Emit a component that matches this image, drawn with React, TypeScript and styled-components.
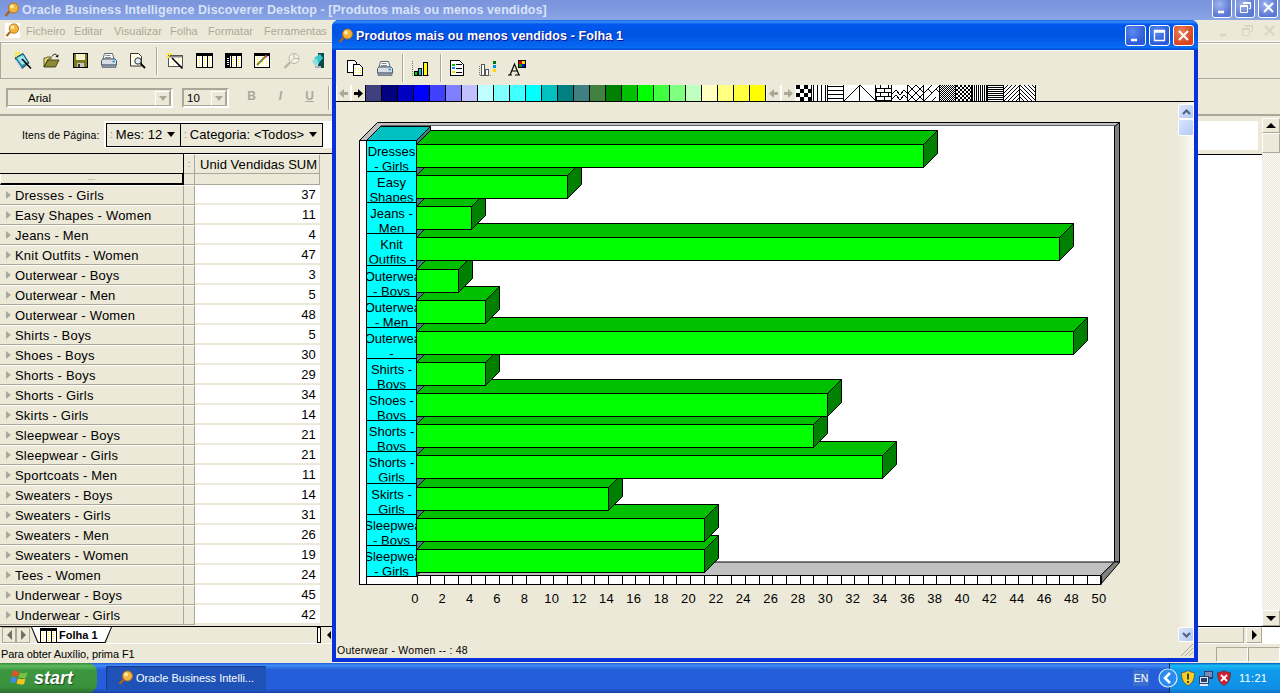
import React from "react";
import styled, { createGlobalStyle } from "styled-components";

const GlobalStyle = createGlobalStyle`
  html, body { margin: 0; padding: 0; background: #ece9d8; overflow: hidden; }
  * { box-sizing: border-box; }
`;

const UI = `"Liberation Sans", Arial, sans-serif`;
const BEIGE = "#ece9d8";

const products: [string, number][] = [
  ["Dresses - Girls", 37], ["Easy Shapes - Women", 11], ["Jeans - Men", 4], ["Knit Outfits - Women", 47],
  ["Outerwear - Boys", 3], ["Outerwear - Men", 5], ["Outerwear - Women", 48], ["Shirts - Boys", 5],
  ["Shoes - Boys", 30], ["Shorts - Boys", 29], ["Shorts - Girls", 34], ["Skirts - Girls", 14],
  ["Sleepwear - Boys", 21], ["Sleepwear - Girls", 21], ["Sportcoats - Men", 11], ["Sweaters - Boys", 14],
  ["Sweaters - Girls", 31], ["Sweaters - Men", 26], ["Sweaters - Women", 19], ["Tees - Women", 24],
  ["Underwear - Boys", 45], ["Underwear - Girls", 42],
];

const chartLabels: [string, string][] = [
  ["Dresses", "- Girls"], ["Easy", "Shapes"], ["Jeans -", "Men"], ["Knit", "Outfits -"],
  ["Outerwear", "- Boys"], ["Outerwear", "- Men"], ["Outerwear", "-"], ["Shirts -", "Boys"],
  ["Shoes -", "Boys"], ["Shorts -", "Boys"], ["Shorts -", "Girls"], ["Skirts -", "Girls"],
  ["Sleepwear", "- Boys"], ["Sleepwear", "- Girls"],
];

const swatches = [
  "#404080", "#000080", "#0000c0", "#0000ff", "#4040ff", "#8080ff", "#c0c0ff", "#c0ffff", "#80ffff",
  "#40ffff", "#00ffff", "#00c0c0", "#008080", "#408080", "#408040", "#008000", "#00c000", "#00ff00",
  "#40ff40", "#80ff80", "#c0ffc0", "#ffffc0", "#ffff80", "#ffff40", "#ffff00",
];

const checker = (n: number) => {
  let d = "";
  for (let y = 0; y < 16; y += n)
    for (let x = 0; x < 16; x += n)
      if ((x + y) / n % 2 === 0) d += `M${x} ${y}h${n}v${n}h${-n}z`;
  return d;
};
const stripes = (step: number, dir: "v" | "h") => {
  let d = "";
  for (let i = step / 2 - 0.5; i < 16; i += step) d += dir === "v" ? `M${i} 0v16` : `M0 ${i}h16`;
  return d;
};
const slashes = (step: number, back: boolean) => {
  let d = "";
  for (let i = -16; i < 32; i += step)
    d += back ? `M${i} 0L${i + 16} 16` : `M${i} 16L${i + 16} 0`;
  return d;
};

const hatchPatterns: { fill?: string; stroke?: string }[] = [
  { fill: checker(4) },
  { stroke: stripes(4, "v") },
  { stroke: stripes(4, "h") },
  { stroke: "M0 16L16 0" },
  { stroke: "M0 0L16 16" },
  { stroke: "M0 3.5h16M0 7.5h16M0 11.5h16M0 15.5h16M4.5 0v3.5M12.5 0v3.5M.5 3.5v4M8.5 3.5v4M4.5 7.5v4M12.5 7.5v4M.5 11.5v4M8.5 11.5v4" },
  { stroke: "M0 9L4 5L8 10L12 5L16 9M0 14L4 10L8 15L12 10L16 14" },
  { stroke: "M0 0L16 16M0 16L16 0M0 8L8 0M8 16L16 8M0 8L8 16M8 0L16 8" },
  { stroke: "M0 16L16 0M0 8L8 0M8 16L12 12M4 4L8 8M12 4L16 8" },
  { fill: checker(1) },
  { fill: checker(2) },
  { stroke: stripes(2, "v") },
  { stroke: stripes(2, "h") },
  { stroke: slashes(4, false) },
  { stroke: slashes(4, true) },
];

/* ---------- frame ---------- */

const Desktop = styled.div`
  position: relative;
  width: 1280px;
  height: 693px;
  overflow: hidden;
  display: flex;
  flex-direction: column;
  font-family: ${UI};
  background: ${BEIGE};
`;

const MainTitle = styled.div`
  height: 20px;
  flex: none;
  display: flex;
  align-items: center;
  padding: 0 2px 0 4px;
  gap: 2px;
  overflow: hidden;
  background: linear-gradient(180deg, #7a94dc 0%, #7f9ae0 50%, #8ba6e6 100%);
`;

const MainTitleText = styled.span`
  font-size: 12.5px;
  font-weight: 700;
  letter-spacing: 0.08px;
  color: #d8e3f8;
  white-space: nowrap;
  margin-right: auto;
`;

const CapButtons = styled.div<{ $lift?: number }>`
  display: flex;
  gap: 3px;
  margin-bottom: ${(p) => p.$lift ?? 0}px;
`;

const CapButton = styled.div<{ $tone: "blue" | "red" | "faded"; $size: number }>`
  width: ${(p) => p.$size}px;
  height: ${(p) => p.$size}px;
  border: 1px solid #fff;
  border-radius: 3px;
  display: flex;
  align-items: center;
  justify-content: center;
  background: ${(p) =>
    p.$tone === "red"
      ? "radial-gradient(circle at 35% 30%, #e8825c, #d9431e 70%)"
      : p.$tone === "faded"
      ? "radial-gradient(circle at 35% 30%, #a0b4ee, #5a78d4 70%)"
      : "radial-gradient(circle at 35% 30%, #5b8af0, #2a5ad8 70%)"};
`;

const MenuBar = styled.div`
  height: 22px;
  flex: none;
  display: flex;
  align-items: center;
  padding-left: 5px;
  background: ${BEIGE};
  border-bottom: 1px solid #fff;
`;

const MenuIcon = styled.div`
  width: 15px;
  height: 15px;
  background: #fff;
  display: flex;
  margin-right: 6px;
`;

const MenuItem = styled.span<{ $w: number }>`
  width: ${(p) => p.$w}px;
  font-size: 11px;
  letter-spacing: 0.05px;
  color: #aca899;
`;

const MdiButtons = styled.div`
  margin-left: auto;
  margin-right: 2px;
  width: 60px;
  display: flex;
  justify-content: space-between;
  padding-right: 2px;
`;

const MainToolbar = styled.div`
  height: 37px;
  flex: none;
  display: flex;
  align-items: center;
  padding-left: 13px;
  border-top: 1px solid #aca899;
  border-bottom: 1px solid #aca899;
  border-left: 1px solid #aca899;
  box-shadow: inset 0 1px 0 #fff;
`;

const ToolSlot = styled.div<{ $w: number }>`
  width: ${(p) => p.$w}px;
  flex: none;
  display: flex;
  align-items: center;
`;

const ToolSep = styled.div<{ $h: number; $mx: number }>`
  width: 1px;
  height: ${(p) => p.$h}px;
  margin: 0 ${(p) => p.$mx}px;
  background: #aca899;
  box-shadow: 1px 0 0 #fff;
  flex: none;
`;

const FontToolbar = styled.div`
  height: 37px;
  flex: none;
  display: flex;
  align-items: center;
  padding-left: 6px;
  padding-top: 3px;
  border-bottom: 2px solid #aca899;
`;

const Combo = styled.div<{ $w: number; $pad: number; $mr: number }>`
  width: ${(p) => p.$w}px;
  height: 20px;
  margin-right: ${(p) => p.$mr}px;
  padding-left: ${(p) => p.$pad}px;
  border: 2px solid #aca899;
  border-right-color: #fff;
  border-bottom-color: #fff;
  box-shadow: inset -1px -1px 0 #aca899;
  display: flex;
  align-items: center;
  justify-content: space-between;
  font-size: 11.5px;
  color: #000;
`;

const ComboArrow = styled.div`
  width: 15px;
  height: 15px;
  margin-right: 1px;
  background: ${BEIGE};
  border: 1px solid #aca899;
  border-top-color: #fff;
  border-left-color: #fff;
  display: flex;
  align-items: center;
  justify-content: center;
  &::after {
    content: "";
    border-top: 5px solid #aca899;
    border-left: 4px solid transparent;
    border-right: 4px solid transparent;
  }
`;

const FormatLetter = styled.span<{ $i?: boolean; $u?: boolean }>`
  width: 29px;
  margin-bottom: 4px;
  text-align: center;
  color: #aca899;
  font-size: 12px;
  font-weight: 700;
  font-style: ${(p) => (p.$i ? "italic" : "normal")};
  text-decoration: ${(p) => (p.$u ? "underline" : "none")};
`;

const Workspace = styled.div`
  height: 527px;
  flex: none;
  display: flex;
`;

const LeftPane = styled.div`
  width: 332px;
  flex: none;
  display: flex;
  flex-direction: column;
`;

const PageItems = styled.div`
  height: 38px;
  flex: none;
  display: flex;
  align-items: center;
  padding-left: 22px;
  gap: 3px;
  border-bottom: 1px solid #000;
  font-size: 10.5px;
`;

const PageItemsLabel = styled.span`
  width: 79px;
  white-space: nowrap;
  letter-spacing: 0.1px;
`;

const PageWell = styled.div`
  flex: 1;
  height: 27px;
  display: flex;
  align-items: center;
  padding-left: 2px;
  background: #fff;
`;

const PageButtons = styled.div`
  display: flex;
  height: 24px;
  border: 1px solid #000;
  background: ${BEIGE};
`;

const PageButton = styled.div<{ $w: number }>`
  width: ${(p) => p.$w}px;
  display: flex;
  align-items: center;
  gap: 3px;
  padding: 0 5px 0 3px;
  font-size: 13px;
  letter-spacing: 0.05px;
  white-space: nowrap;
  & + & { border-left: 1px solid #000; }
  &::after {
    content: "";
    margin-left: auto;
    border-top: 5px solid #000;
    border-left: 4.5px solid transparent;
    border-right: 4.5px solid transparent;
  }
`;

const Grip = styled.span`
  color: #8a8678;
  font-size: 10px;
  letter-spacing: 0;
`;

const Grid = styled.div`
  flex: 1;
  min-height: 0;
  overflow: hidden;
  width: 320px;
`;

const GridRow = styled.div<{ $h: number }>`
  height: ${(p) => p.$h}px;
  display: grid;
  grid-template-columns: 184px 11px 125px;
`;

const HeaderBlank = styled.div`
  border-right: 1px solid #000;
  border-bottom: 1px solid #000;
`;

const HeaderGrip = styled.div`
  display: flex;
  align-items: center;
  justify-content: center;
  color: #8a8678;
  font-size: 9px;
  border-right: 1px solid #aca899;
  border-bottom: 1px solid #aca899;
  border-top: 1px solid #fff;
`;

const HeaderCell = styled.div`
  display: flex;
  align-items: center;
  padding-left: 5px;
  font-size: 13px;
  letter-spacing: 0.05px;
  white-space: nowrap;
  border-right: 1px solid #aca899;
  border-bottom: 1px solid #aca899;
  border-top: 1px solid #fff;
`;

const SubHeader = styled.div`
  display: flex;
  justify-content: center;
  font-size: 9px;
  line-height: 7px;
  color: #8a8678;
  border-right: 2px solid #000;
  border-bottom: 2px solid #000;
  border-left: 1px solid #fff;
`;

const FillerCell = styled.div`
  border-right: 1px solid #aca899;
  border-bottom: 1px solid #aca899;
`;

const RowHead = styled.div`
  display: flex;
  align-items: center;
  gap: 4px;
  padding-left: 6px;
  font-size: 13px;
  letter-spacing: 0.2px;
  white-space: nowrap;
  border-top: 1px solid #fff;
  border-right: 1px solid #aca899;
  border-bottom: 1px solid #aca899;
  &::before {
    content: "";
    border-left: 5px solid #aca899;
    border-top: 4px solid transparent;
    border-bottom: 4px solid transparent;
  }
`;

const RowGap = styled.div`
  border-top: 1px solid #fff;
  border-right: 1px solid #aca899;
  border-bottom: 1px solid #aca899;
`;

const RowValue = styled.div`
  background: #fff;
  display: flex;
  align-items: center;
  justify-content: flex-end;
  padding-right: 4px;
  font-size: 13px;
  letter-spacing: 0.2px;
  border-bottom: 2px solid ${BEIGE};
`;

const TabStrip = styled.div`
  height: 17px;
  flex: none;
  display: flex;
  align-items: stretch;
  border-top: 1px solid #000;
  padding-left: 2px;
`;

const TabArrow = styled.div<{ $left?: boolean }>`
  width: 14px;
  border: 1px solid #aca899;
  display: flex;
  align-items: center;
  justify-content: center;
  &::after {
    content: "";
    border-top: 5px solid transparent;
    border-bottom: 5px solid transparent;
    ${(p) => (p.$left ? "border-right: 5px solid #716f64;" : "border-left: 5px solid #716f64;")}
  }
`;

const SheetTab = styled.div`
  width: 81px;
  margin-left: 1px;
  display: flex;
  align-items: center;
  gap: 2px;
  padding-left: 9px;
  font-size: 11px;
  font-weight: 700;
  white-space: nowrap;
  clip-path: polygon(0 0, 100% 0, 92% 100%, 8% 100%);
  background: #000;
  position: relative;
  z-index: 0;
  &::before {
    content: "";
    position: absolute;
    inset: 0 1px 1px 1px;
    background: #fff;
    clip-path: polygon(0 0, 100% 0, 92% 100%, 8% 100%);
    z-index: -1;
  }
`;

const TabRest = styled.div`
  flex: 1;
  display: flex;
  justify-content: flex-end;
`;

const SplitHandle = styled.div`
  width: 4px;
  margin-right: 6px;
  background: #fff;
  border: 1px solid #000;
`;

const BlackArrow = styled.div`
  width: 5px;
  display: flex;
  align-items: center;
  &::after {
    content: "";
    border-top: 4px solid transparent;
    border-bottom: 4px solid transparent;
    border-right: 4px solid #000;
  }
`;

const BehindWindow = styled.div`
  flex: 1;
`;

const RightPane = styled.div`
  width: 82px;
  flex: none;
  display: flex;
  flex-direction: column;
`;

const RightBody = styled.div`
  flex: 1;
  display: flex;
  min-height: 0;
`;

const RightContent = styled.div`
  flex: 1;
  display: flex;
  flex-direction: column;
`;

const RightTop = styled.div`
  height: 39px;
  flex: none;
  padding: 5px 4px 4px 0;
  border-bottom: 1px solid #000;
`;

const RightTopBox = styled.div`
  height: 100%;
  background: #fff;
`;

const RightWhite = styled.div`
  flex: 1;
  background: #fff;
`;

const VScroll = styled.div`
  width: 18px;
  flex: none;
  display: flex;
  flex-direction: column;
  padding-top: 2px;
  background: ${BEIGE};
`;

const ScrollBtn = styled.div<{ $h: number }>`
  height: ${(p) => p.$h}px;
  flex: none;
  background: ${BEIGE};
  border: 1px solid #aca899;
  border-top-color: #fff;
  border-left-color: #fff;
  display: flex;
  align-items: center;
  justify-content: center;
`;

const UpTri = styled.div`
  border-bottom: 5px solid #000;
  border-left: 5px solid transparent;
  border-right: 5px solid transparent;
`;

const DownTri = styled.div`
  border-top: 5px solid #000;
  border-left: 5px solid transparent;
  border-right: 5px solid transparent;
`;

const RightTri = styled.div`
  border-left: 5px solid #000;
  border-top: 5px solid transparent;
  border-bottom: 5px solid transparent;
`;

const DitherTrack = styled.div`
  flex: 1;
  background: repeating-conic-gradient(#fff 0 25%, #e6e3d2 0 50%) 0 0 / 2px 2px;
`;

const RightHScroll = styled.div`
  height: 17px;
  flex: none;
  display: flex;
  border-top: 1px solid #000;
`;

const HScrollFill = styled.div`
  width: 46px;
  border: 1px solid #aca899;
  border-top-color: #fff;
  border-left: 0;
`;

const HScrollBtn = styled.div`
  width: 16px;
  margin-left: 2px;
  border: 1px solid #aca899;
  border-top-color: #fff;
  border-left-color: #fff;
  display: flex;
  align-items: center;
  justify-content: center;
`;

const CornerWhite = styled.div`
  flex: 1;
  background: #fff;
`;

const StatusBar = styled.div`
  height: 20px;
  flex: none;
  display: flex;
  align-items: center;
  padding-left: 1px;
  font-size: 11px;
  letter-spacing: -0.1px;
  border-top: 1px solid #fff;
`;

const StatusPanels = styled.div`
  margin-left: auto;
  display: flex;
  align-self: stretch;
  padding: 3px 0 1px;
`;

const StatusPanel = styled.div<{ $w: number }>`
  width: ${(p) => p.$w}px;
  border: 1px solid #fff;
  border-top-color: #aca899;
  border-left-color: #aca899;
`;

/* ---------- taskbar ---------- */

const Taskbar = styled.div`
  height: 30px;
  flex: none;
  margin-top: auto;
  display: flex;
  align-items: stretch;
  background: linear-gradient(180deg, #245edb 0%, #3f8cf3 8%, #245edb 22%, #245edb 85%, #1941a5 100%);
`;

const StartButton = styled.div`
  width: 97px;
  flex: none;
  display: flex;
  align-items: center;
  gap: 5px;
  padding-left: 10px;
  color: #fff;
  font-size: 18px;
  font-weight: 700;
  font-style: italic;
  text-shadow: 1px 1px 1px #1c4a1c;
  border-radius: 0 9px 9px 0;
  background: linear-gradient(180deg, #388e3c 0%, #5cb85c 10%, #3c963f 25%, #3a913d 80%, #2b6e2e 100%);
`;

const TaskButton = styled.div`
  width: 160px;
  height: 24px;
  align-self: center;
  margin-left: 9px;
  display: flex;
  align-items: center;
  gap: 2px;
  padding-left: 12px;
  color: #fff;
  font-size: 11px;
  white-space: nowrap;
  border-radius: 2px;
  background: #1e52b7;
  box-shadow: inset 1px 1px 1px #153a8a;
`;

const Lang = styled.div`
  margin-left: auto;
  margin-right: 9px;
  align-self: center;
  width: 16px;
  height: 16px;
  display: flex;
  align-items: center;
  justify-content: center;
  background: #3a6fcf;
  color: #fff;
  font-size: 10.5px;
`;

const ChevronWrap = styled.div`
  width: 20px;
  flex: none;
  align-self: center;
  margin-right: -9px;
  position: relative;
  z-index: 1;
  display: flex;
`;

const Tray = styled.div`
  width: 111px;
  flex: none;
  display: flex;
  align-items: center;
  padding-left: 11px;
  gap: 3px;
  background: linear-gradient(180deg, #0c59b9 0%, #19b9f3 8%, #0f9beb 25%, #0f8fe6 85%, #0e72c8 100%);
  border-left: 1px solid #092e51;
`;

const Clock = styled.span`
  margin-left: 5px;
  color: #fff;
  font-size: 11px;
  letter-spacing: 0.3px;
`;

/* ---------- chart window ---------- */

const ChildWindow = styled.div`
  position: absolute;
  left: 332px;
  top: 20px;
  width: 866px;
  height: 642px;
  display: flex;
  flex-direction: column;
  background: #0831d9;
  border-radius: 7px 7px 0 0;
  padding: 0 4px 4px;
`;

const ChildTitle = styled.div`
  height: 30px;
  flex: none;
  display: flex;
  align-items: center;
  gap: 2px;
  margin: 0 -4px;
  padding: 1px 4px 0 6px;
  border-radius: 7px 7px 0 0;
  background: linear-gradient(180deg, #0a5fe8 0%, #3a90f8 6%, #0058ee 14%, #0054e3 50%, #0466f0 85%, #0a6cf2 92%, #0244c4 100%);
`;

const ChildTitleText = styled.span`
  font-size: 12.5px;
  font-weight: 700;
  letter-spacing: 0.11px;
  color: #fff;
  text-shadow: 1px 1px 0 #0f1089;
  margin-right: auto;
`;

const ChildBody = styled.div`
  flex: 1;
  min-height: 0;
  display: flex;
  flex-direction: column;
  background: ${BEIGE};
`;

const ChildToolbar = styled.div`
  height: 35px;
  flex: none;
  display: flex;
  align-items: center;
  padding-left: 11px;
  border-top: 1px solid #fff;
`;

const PaletteRow = styled.div`
  height: 17px;
  flex: none;
  display: flex;
  border-bottom: 1px solid #000;
`;

const PalNav = styled.div<{ $off?: boolean }>`
  width: 15px;
  flex: none;
  display: flex;
  align-items: center;
  justify-content: center;
  background: ${BEIGE};
  border-right: 1px solid ${(p) => (p.$off ? "#fff" : "#000")};
  border-left: 1px solid #fff;
`;

const Swatch = styled.div<{ $c: string }>`
  width: 16px;
  flex: none;
  background: ${(p) => p.$c};
  border-right: 1px solid #000;
`;

const HatchCell = styled.svg`
  display: block;
  flex: none;
`;

const ChildMain = styled.div`
  flex: 1;
  min-height: 0;
  display: flex;
`;

const ChartCanvas = styled.div`
  flex: 1;
  min-width: 0;
`;

const ChartSvg = styled.svg`
  display: block;
`;

const CellText = styled.text`
  font-family: ${UI};
  font-size: 13px;
  text-anchor: middle;
  fill: #000;
`;

const AxisText = styled.text`
  font-family: ${UI};
  font-size: 13px;
  letter-spacing: 0.3px;
  text-anchor: middle;
  fill: #000;
`;

const XpScroll = styled.div`
  width: 16px;
  flex: none;
  display: flex;
  flex-direction: column;
  padding-top: 2px;
  background: linear-gradient(90deg, ${BEIGE}, #fbfbf8);
`;

const XpScrollBtn = styled.div<{ $h: number }>`
  height: ${(p) => p.$h}px;
  flex: none;
  border: 1px solid #fff;
  border-radius: 2px;
  display: flex;
  align-items: center;
  justify-content: center;
  background: linear-gradient(135deg, #dbe6fd, #b4c8f6);
`;

const XpTrack = styled.div`
  flex: 1;
`;

const ChildStatus = styled.div`
  height: 16px;
  flex: none;
  display: flex;
  align-items: center;
  justify-content: space-between;
  padding-left: 1px;
  font-size: 10.5px;
  letter-spacing: 0.25px;
`;

/* ---------- icons ---------- */

const Magnifier = ({ size = 16 }: { size?: number }) => (
  <svg width={size} height={size} viewBox="0 0 16 16">
    <path d="M5.5 9.5L1.5 14" stroke="#a8641c" strokeWidth="2.4" />
    <circle cx="9.5" cy="6" r="5" fill="#f4b43c" stroke="#b8701c" />
    <circle cx="8" cy="4.5" r="2" fill="#fdeaa8" />
  </svg>
);

const Sheet = ({ dark }: { dark?: boolean }) => (
  <svg width="17" height="15" viewBox="0 0 17 15" shapeRendering="crispEdges">
    <rect x=".5" y=".5" width="16" height="14" fill="#fff" stroke="#000" />
    <path d="M1 1h15v2H1z" fill="#000" />
    {dark && <path d="M1 1h4v13H1z" fill="#000" />}
    {dark && <path d="M2 5.500h2M2 7.500h2M2 9.500h2M2 11.500h2" stroke="#fff" />}
    <path d="M6.500 3v11M11.500 3v11" stroke="#000" />
    <path d={dark ? "M8.500 4v10M13.500 4v10" : "M3.500 4v10M8.500 4v10M13.500 4v10"} stroke="#ffee00" strokeDasharray="1 1" />
  </svg>
);

const WizardBook = () => (
  <svg width="18" height="18" viewBox="0 0 18 18">
    <path d="M1 6L9 1.500L15 11L8 16.500z" fill="#2f8f9c" stroke="#17456a" />
    <path d="M3 6L9 3L13.500 10L8 13z" fill="#9be8ec" />
    <path d="M1.500 8L7.500 17" stroke="#d8dcec" strokeWidth="1.400" />
    <path d="M8 7L17 16.500" stroke="#000" strokeWidth="1.600" />
    <path d="M1 0h2v2H1zM4 0h2v2H4zM1 3h2v2H1zM3 2h1v1H3z" fill="#ffee00" />
  </svg>
);

const OpenFolder = () => (
  <svg width="17" height="15" viewBox="0 0 17 15">
    <path d="M1 14V5h2l1-1h4v2H5L1 14z" fill="#f2dd6a" stroke="#3c3c10" strokeWidth=".8" />
    <path d="M1 14L5 7h11l-3.500 7z" fill="#8c8a32" stroke="#2c2c10" strokeWidth=".8" />
    <path d="M9 3.500C10 1 13 0.500 14 2.500" fill="none" stroke="#000" strokeWidth=".9" />
    <path d="M15.500 1.500L15 4.500L12.500 3.500z" fill="#000" />
  </svg>
);

const Floppy = () => (
  <svg width="15" height="15" viewBox="0 0 15 15" shapeRendering="crispEdges">
    <path d="M.5.5h14v14H.5z" fill="#7a7a20" stroke="#000" />
    <path d="M3 1h9v6H3z" fill="#f4f0c8" />
    <path d="M4 10h7v4H4z" fill="#c8c8c0" />
    <path d="M5 11h2v3H5z" fill="#333" />
  </svg>
);

const Printer = () => (
  <svg width="16" height="15" viewBox="0 0 16 15">
    <path d="M3.500 .5h8L13 6H2z" fill="#fff" stroke="#5a6a7a" />
    <path d="M4.500 2.500h5M4 4.500h6" stroke="#8a8a8a" />
    <path d="M.5 7.500L2 6h12l1.500 1.500V12H.5z" fill="#d8dce4" stroke="#4a5a6a" />
    <path d="M1 12h14v2.500H1z" fill="#8a98a8" stroke="#4a5a6a" strokeWidth=".6" />
    <path d="M11.500 8.500h2.500" stroke="#1c9cd8" strokeWidth="1.600" />
  </svg>
);

const Preview = () => (
  <svg width="16" height="16" viewBox="0 0 16 16">
    <path d="M.5 .5h8l3 3V13H.5z" fill="#fffde8" stroke="#333" />
    <circle cx="8" cy="8" r="3.200" fill="#dcecf4" stroke="#333" />
    <path d="M10.500 10.500L15 15" stroke="#000" strokeWidth="1.800" />
  </svg>
);

const WizardSheet = () => (
  <svg width="17" height="16" viewBox="0 0 17 16">
    <rect x="1.500" y="2.500" width="14" height="11" fill="#fff" stroke="#555" />
    <path d="M2 3h13v1.500H2z" fill="#888" />
    <path d="M6.500 5v8M11.500 5v8" stroke="#ffee00" strokeDasharray="1 1" />
    <path d="M0 0h2v2H0zM3 0h2v2H3zM0 3h2v2H0zM2 2h1v1H2z" fill="#ffee00" />
    <path d="M5 5L15.500 15.500" stroke="#000" strokeWidth="1.600" />
  </svg>
);

const PencilSheet = () => (
  <svg width="16" height="15" viewBox="0 0 16 15" shapeRendering="crispEdges">
    <rect x=".5" y=".5" width="15" height="14" fill="#fff" stroke="#000" />
    <path d="M1 1h14v2H1z" fill="#000" />
    <path d="M3.500 4v10M8.500 4v10M12.500 8v6" stroke="#ffee00" strokeDasharray="1 1" />
    <path d="M3 12L12 3" stroke="#7a8a20" strokeWidth="2" shapeRendering="auto" />
    <path d="M11.500 2.500L13 4" stroke="#e0208c" strokeWidth="2" shapeRendering="auto" />
  </svg>
);

const GreyLens = () => (
  <svg width="18" height="17" viewBox="0 0 18 17" fill="none" stroke="#b8b5a4">
    <circle cx="11" cy="6.500" r="5" fill="#f4f2e8" />
    <path d="M11 1.500v5l-3.500 3.500M11 6.500h5" />
    <path d="M7 10.500L1.500 16" strokeWidth="2.400" />
  </svg>
);

const TealTool = () => (
  <svg width="13" height="16" viewBox="0 0 13 16">
    <path d="M6 0h6v15H6z" fill="#0d4a4c" />
    <path d="M2 5L8 1l3 4-5 6z" fill="#38c8c8" />
    <path d="M0 8l4-3 3 6-4 2z" fill="#8ce0e0" />
    <path d="M3 13h6v2H3z" fill="#a8b8b8" />
  </svg>
);

const CopySheets = () => (
  <svg width="16" height="16" viewBox="0 0 16 16" shapeRendering="crispEdges">
    <path d="M.5 .5h7l2 2v10H.5z" fill="#fff" stroke="#000" />
    <path d="M6.500 4.500h6l3 3v8h-9z" fill="#fff" stroke="#000" />
    <path d="M8.500 8v6M11.500 8v6M13.500 8v6" stroke="#ffee00" strokeDasharray="1 1" />
  </svg>
);

const BarsIcon = () => (
  <svg width="17" height="16" viewBox="0 0 17 16" shapeRendering="crispEdges">
    <path d="M.5 1v14.500H17" fill="none" stroke="#777" strokeDasharray="1 1" />
    <path d="M2.500 11.500h3v4h-3z" fill="#00d000" stroke="#000" />
    <path d="M6.500 8.500h3v7h-3z" fill="#00c0e0" stroke="#000" />
    <path d="M11.500 2.500h4v13h-4z" fill="#ffff00" stroke="#000" />
  </svg>
);

const ListIcon = () => (
  <svg width="14" height="16" viewBox="0 0 14 16" shapeRendering="crispEdges">
    <path d="M.5 .5h9l4 4v11H.5z" fill="#fff" stroke="#000" />
    <path d="M2 4h3v2H2z" fill="#00c000" />
    <path d="M2 7h3v2H2z" fill="#0090e0" />
    <path d="M2 11h3v2H2z" fill="#ffd800" />
    <path d="M6 4.500h6M6 8.500h6M6 12.500h6" stroke="#000" />
  </svg>
);

const LegendBars = () => (
  <svg width="17" height="15" viewBox="0 0 17 15" shapeRendering="crispEdges">
    <path d="M.5 5v9.500H13" fill="none" stroke="#777" strokeDasharray="1 1" />
    <path d="M2.500 3.500h3v11h-3zM6.500 8.500h3v6h-3z" fill="#fff" stroke="#555" />
    <path d="M14 0h3v3h-3z" fill="#007000" />
    <path d="M14 4h3v3h-3z" fill="#0090e0" />
    <path d="M14 8h3v3h-3z" fill="#ffd800" />
  </svg>
);

const FontColour = () => (
  <svg width="18" height="16" viewBox="0 0 18 16" shapeRendering="crispEdges">
    <path d="M0 15h4M7 15h5M2 15L6.500 4 11 15M3.500 11h6" fill="none" stroke="#000" strokeWidth="1.200" shapeRendering="auto" />
    <path d="M10 .5h7v7h-7z" fill="#fff" stroke="#000" />
    <path d="M11 1h3v3h-3z" fill="#e00000" />
    <path d="M14 1h3v3h-3z" fill="#ffd800" />
    <path d="M11 4h3v3h-3z" fill="#00a000" />
    <path d="M14 4h3v3h-3z" fill="#0000e0" />
  </svg>
);

const Flag = () => (
  <svg width="19" height="18" viewBox="0 0 19 18">
    <path d="M3 2C5 1 7 2 9 3L7.500 8C5.500 7 3.500 6.500 1.500 7.500z" fill="#e2532a" />
    <path d="M10 3.500C12 4.500 15 4.500 17.500 3L16 8.500C13.500 9.500 11 9 8.500 8.500z" fill="#7cc242" />
    <path d="M1 8.500C3 7.500 5 8 7 9L5.500 14C3.500 13 1.500 13 0 14z" fill="#3a8ee8" />
    <path d="M8 9.500C10.500 10.500 13 10.500 15.500 9.500L14 15C11.500 16 9 15.500 6.500 14.500z" fill="#f6c420" />
  </svg>
);

const Shield = ({ fill, mark }: { fill: string; mark: React.ReactNode }) => (
  <svg width="14" height="16" viewBox="0 0 14 16">
    <path d="M7 .5C9 2 11 2.500 13.500 2.500C13.500 9 12 13 7 15.500C2 13 .5 9 .5 2.500C3 2.500 5 2 7 .5z" fill={fill} stroke="#3a3a3a" strokeWidth=".6" />
    {mark}
  </svg>
);

const Network = () => (
  <svg width="16" height="16" viewBox="0 0 16 16" shapeRendering="crispEdges">
    <path d="M6 1h9v8H6z" fill="#2c3e6c" />
    <path d="M7 2h7v5H7z" fill="#7a8cb8" />
    <path d="M1 6h9v7H1z" fill="#dfe6f4" stroke="#2c3e6c" />
    <path d="M2.500 7.500h6v4h-6z" fill="#2c3e6c" />
    <path d="M2 14h8v2H2z" fill="#dfe6f4" />
  </svg>
);

const Chevron = () => (
  <svg width="20" height="20" viewBox="0 0 20 20">
    <circle cx="10" cy="10" r="9" fill="#2a8af0" stroke="#d8ecff" strokeWidth="1.200" />
    <path d="M12 5L7 10L12 15" fill="none" stroke="#fff" strokeWidth="2.600" />
  </svg>
);

const NavArrow = ({ right, color }: { right?: boolean; color: string }) => (
  <svg width="9" height="9" viewBox="0 0 9 9">
    <path d={right ? "M0 3h4V0l5 4.500L4 9V6H0z" : "M9 3H5V0L0 4.500 5 9V6h4z"} fill={color} />
  </svg>
);

const Glyph = ({ kind, color }: { kind: "min" | "max" | "restore" | "close"; color: string }) => (
  <svg width="13" height="13" viewBox="0 0 13 13" fill="none" stroke={color}>
    {kind === "min" && <path d="M2 11h6" strokeWidth="2.500" />}
    {kind === "max" && <path d="M1.500 1.500h10v10h-10zM1.500 3h10" strokeWidth="1.300" />}
    {kind === "restore" && <path d="M4.500 3V1.500h7v6H10M1.500 4.500h7v7h-7zM1.500 5.500h7M4.500 2.500h7" />}
    {kind === "close" && <path d="M2 2l9 9M11 2l-9 9" strokeWidth="2" />}
  </svg>
);

const ScrollChevron = ({ up }: { up?: boolean }) => (
  <svg width="9" height="6" viewBox="0 0 9 6">
    <path d={up ? "M1 5L4.500 1.500 8 5" : "M1 1L4.500 4.500 8 1"} fill="none" stroke="#4d6185" strokeWidth="2" />
  </svg>
);

const ResizeGrip = () => (
  <svg width="14" height="12" viewBox="0 0 14 12" fill="none" stroke="#aca899">
    <path d="M13 0L1 12M13 4L5 12M13 8L9 12" />
  </svg>
);

const HatchSwatch = ({ fill, stroke }: { fill?: string; stroke?: string }) => (
  <HatchCell width="16" height="16" viewBox="0 0 16 16">
    <rect width="16" height="16" fill="#fff" />
    {fill && <path d={fill} fill="#000" shapeRendering="crispEdges" />}
    {stroke && <path d={stroke} fill="none" stroke="#000" strokeWidth="1" shapeRendering="crispEdges" />}
    <path d="M15.500 0v16" stroke="#000" />
  </HatchCell>
);

/* ---------- chart ---------- */

const X0 = 416.5;
const UNIT = 13.68;
const DEPTH = 14;
const BAR_H = 23;

const cellTop = (i: number) => Math.round(140 + 31.14 * i);
const barTop = (i: number) => cellTop(i) + 4;

const Chart = () => {
  const values = products.slice(0, 14).map((p) => p[1]);
  return (
    <ChartSvg width="843" height="540" viewBox="336 102 843 540">
      <defs>
        {chartLabels.map((_, i) => (
          <clipPath id={`cell-${i}`} key={i}>
            <rect x="367" y={cellTop(i)} width="49" height="30.500" />
          </clipPath>
        ))}
      </defs>
      {/* back walls */}
      <path d="M359.500 140.500L377.500 122.500H1119.500V126H381L367 140.500z" fill="#c0c0c0" stroke="#000" />
      <rect x="381" y="126" width="733" height="436" fill="#fff" />
      <path d="M1114.500 126.500L1119.500 122.500V562H1114.500z" fill="#808080" stroke="#000" />
      <path d="M367 575.500L381 562H1114.500L1100.500 575.500z" fill="#c0c0c0" stroke="#000" />
      <path d="M1100.500 575.500L1114.500 562H1119.500V562.500L1100.500 584.500z" fill="#808080" stroke="#000" />
      <rect x="359.500" y="140.500" width="7" height="444" fill="#fff" stroke="#000" />
      <rect x="366.500" y="575.500" width="734" height="9" fill="#fff" stroke="#000" />
      {Array.from({ length: 51 }, (_, v) => (
        <path key={v} d={`M${Math.round(X0 + v * UNIT) + 0.5} 575.500v9`} stroke="#000" />
      ))}
      {/* label column side and top */}
      <path d="M416.500 140.500L430.500 126.500V562L416.500 576z" fill="#408080" stroke="#000" />
      <path d="M366.500 140.500L380.500 126.500H430.500L416.500 140.500z" fill="#00c0c0" stroke="#000" />
      {/* bars, bottom first so the upper ones overlap */}
      {values
        .map((v, i) => ({ v, i }))
        .reverse()
        .map(({ v, i }) => {
          const y = barTop(i) + 0.5;
          const x = Math.round(X0 + v * UNIT) + 0.5;
          const l = 416.5;
          return (
            <g key={i} stroke="#000">
              <path d={`M${l} ${y}L${l + DEPTH} ${y - DEPTH}H${x + DEPTH}L${x} ${y}z`} fill="#00c000" />
              <path d={`M${x} ${y}L${x + DEPTH} ${y - DEPTH}V${y - DEPTH + BAR_H}L${x} ${y + BAR_H}z`} fill="#008000" />
              <rect x={l} y={y} width={x - l} height={BAR_H} fill="#00ff00" />
            </g>
          );
        })}
      {/* category cells, long words start at the cell edge and run out of it */}
      {chartLabels.map(([a, b], i) => (
        <g key={a + b + i}>
          <rect x="366.500" y={cellTop(i) + 0.5} width="50" height={cellTop(i + 1) - cellTop(i)} fill="#00ffff" stroke="#000" />
          <g clipPath={`url(#cell-${i})`}>
            <CellText x={a.length >= 9 ? 395 : 391.5} y={cellTop(i) + 16}>{a}</CellText>
            <CellText x="391.500" y={cellTop(i) + 31}>{b}</CellText>
          </g>
        </g>
      ))}
      {Array.from({ length: 26 }, (_, k) => (
        <AxisText key={k} x={415 + k * 27.36} y="603">{k * 2}</AxisText>
      ))}
    </ChartSvg>
  );
};

/* ---------- page ---------- */

const menu: [string, number][] = [
  ["Ficheiro", 48], ["Editar", 40], ["Visualizar", 56], ["Folha", 38], ["Formatar", 56], ["Ferramentas", 80],
];

export default function App() {
  return (
    <Desktop>
      <GlobalStyle />
      <MainTitle>
        <Magnifier />
        <MainTitleText>Oracle Business Intelligence Discoverer Desktop - [Produtos mais ou menos vendidos]</MainTitleText>
        <CapButtons $lift={5}>
          <CapButton $tone="faded" $size={20}><Glyph kind="min" color="#fff" /></CapButton>
          <CapButton $tone="faded" $size={20}><Glyph kind="restore" color="#fff" /></CapButton>
          <CapButton $tone="faded" $size={20}><Glyph kind="close" color="#fff" /></CapButton>
        </CapButtons>
      </MainTitle>

      <MenuBar>
        <MenuIcon><Magnifier size={15} /></MenuIcon>
        {menu.map(([label, w]) => (
          <MenuItem key={label} $w={w}>{label}</MenuItem>
        ))}
        <MdiButtons>
          <Glyph kind="min" color="#d8d5c4" />
          <Glyph kind="restore" color="#d8d5c4" />
          <Glyph kind="close" color="#d8d5c4" />
        </MdiButtons>
      </MenuBar>

      <MainToolbar>
        <ToolSlot $w={29}><WizardBook /></ToolSlot>
        <ToolSlot $w={30}><OpenFolder /></ToolSlot>
        <ToolSlot $w={28}><Floppy /></ToolSlot>
        <ToolSlot $w={29}><Printer /></ToolSlot>
        <ToolSlot $w={16}><Preview /></ToolSlot>
        <ToolSep $h={28} $mx={10} />
        <ToolSlot $w={29}><WizardSheet /></ToolSlot>
        <ToolSlot $w={29}><Sheet /></ToolSlot>
        <ToolSlot $w={29}><Sheet dark /></ToolSlot>
        <ToolSlot $w={29}><PencilSheet /></ToolSlot>
        <ToolSlot $w={29}><GreyLens /></ToolSlot>
        <ToolSlot $w={13}><TealTool /></ToolSlot>
      </MainToolbar>

      <FontToolbar>
        <Combo $w={167} $pad={20} $mr={9}>Arial<ComboArrow /></Combo>
        <Combo $w={47} $pad={3} $mr={8}>10<ComboArrow /></Combo>
        <FormatLetter>B</FormatLetter>
        <FormatLetter $i>I</FormatLetter>
        <FormatLetter $u>U</FormatLetter>
        <ToolSep $h={24} $mx={4} />
      </FontToolbar>

      <Workspace>
        <LeftPane>
          <PageItems>
            <PageItemsLabel>Itens de Página:</PageItemsLabel>
            <PageWell>
              <PageButtons>
                <PageButton $w={73}><Grip>:</Grip>Mes: 12</PageButton>
                <PageButton $w={142}><Grip>:</Grip>Categoria: &lt;Todos&gt;</PageButton>
              </PageButtons>
            </PageWell>
          </PageItems>
          <Grid>
            <GridRow $h={20}>
              <HeaderBlank />
              <HeaderGrip>:</HeaderGrip>
              <HeaderCell>Unid Vendidas SUM</HeaderCell>
            </GridRow>
            <GridRow $h={11}>
              <SubHeader>...</SubHeader>
              <FillerCell />
              <FillerCell />
            </GridRow>
            {products.map(([name, value]) => (
              <GridRow $h={20} key={name}>
                <RowHead>{name}</RowHead>
                <RowGap />
                <RowValue>{value}</RowValue>
              </GridRow>
            ))}
          </Grid>
          <TabStrip>
            <TabArrow $left />
            <TabArrow />
            <SheetTab><Sheet />Folha 1</SheetTab>
            <TabRest>
              <SplitHandle />
              <BlackArrow />
            </TabRest>
          </TabStrip>
        </LeftPane>
        <BehindWindow />
        <RightPane>
          <RightBody>
            <RightContent>
              <RightTop><RightTopBox /></RightTop>
              <RightWhite />
            </RightContent>
            <VScroll>
              <ScrollBtn $h={15}><UpTri /></ScrollBtn>
              <ScrollBtn $h={20} />
              <DitherTrack />
              <ScrollBtn $h={16}><DownTri /></ScrollBtn>
            </VScroll>
          </RightBody>
          <RightHScroll>
            <HScrollFill />
            <HScrollBtn><RightTri /></HScrollBtn>
            <CornerWhite />
          </RightHScroll>
        </RightPane>
      </Workspace>

      <StatusBar>
        Para obter Auxílio, prima F1
        <StatusPanels>
          <StatusPanel $w={32} />
          <StatusPanel $w={32} />
        </StatusPanels>
      </StatusBar>

      <Taskbar>
        <StartButton><Flag />start</StartButton>
        <TaskButton><Magnifier />Oracle Business Intelli...</TaskButton>
        <Lang>EN</Lang>
        <ChevronWrap><Chevron /></ChevronWrap>
        <Tray>
          <Shield fill="#f6d020" mark={<path d="M7 3.500v6M7 11v2" stroke="#333" strokeWidth="1.800" />} />
          <Network />
          <Shield fill="#d02030" mark={<path d="M4 5l6 6M10 5l-6 6" stroke="#fff" strokeWidth="1.800" />} />
          <Clock>11:21</Clock>
        </Tray>
      </Taskbar>

      <ChildWindow>
        <ChildTitle>
          <Magnifier />
          <ChildTitleText>Produtos mais ou menos vendidos - Folha 1</ChildTitleText>
          <CapButtons>
            <CapButton $tone="blue" $size={21}><Glyph kind="min" color="#fff" /></CapButton>
            <CapButton $tone="blue" $size={21}><Glyph kind="max" color="#fff" /></CapButton>
            <CapButton $tone="red" $size={21}><Glyph kind="close" color="#fff" /></CapButton>
          </CapButtons>
        </ChildTitle>
        <ChildBody>
          <ChildToolbar>
            <ToolSlot $w={30}><CopySheets /></ToolSlot>
            <ToolSlot $w={16}><Printer /></ToolSlot>
            <ToolSep $h={28} $mx={9} />
            <ToolSlot $w={19}><BarsIcon /></ToolSlot>
            <ToolSep $h={28} $mx={9} />
            <ToolSlot $w={29}><ListIcon /></ToolSlot>
            <ToolSlot $w={29}><LegendBars /></ToolSlot>
            <ToolSlot $w={18}><FontColour /></ToolSlot>
          </ChildToolbar>
          <PaletteRow>
            <PalNav $off><NavArrow color="#aca899" /></PalNav>
            <PalNav><NavArrow right color="#000" /></PalNav>
            {swatches.map((c) => (
              <Swatch key={c} $c={c} />
            ))}
            <PalNav $off><NavArrow color="#aca899" /></PalNav>
            <PalNav $off><NavArrow right color="#aca899" /></PalNav>
            {hatchPatterns.map((p, i) => (
              <HatchSwatch key={i} fill={p.fill} stroke={p.stroke} />
            ))}
          </PaletteRow>
          <ChildMain>
            <ChartCanvas><Chart /></ChartCanvas>
            <XpScroll>
              <XpScrollBtn $h={15}><ScrollChevron up /></XpScrollBtn>
              <XpScrollBtn $h={17} />
              <XpTrack />
              <XpScrollBtn $h={15}><ScrollChevron /></XpScrollBtn>
            </XpScroll>
          </ChildMain>
          <ChildStatus>
            Outerwear - Women -- : 48
            <ResizeGrip />
          </ChildStatus>
        </ChildBody>
      </ChildWindow>
    </Desktop>
  );
}
